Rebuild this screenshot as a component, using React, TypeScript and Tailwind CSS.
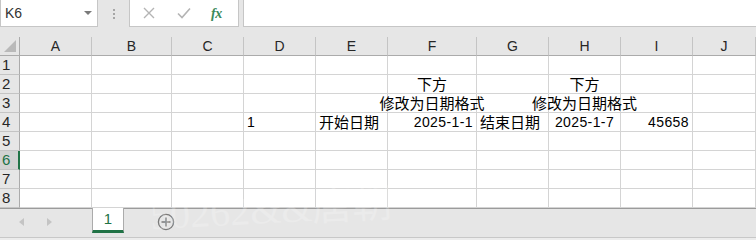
import React from 'react';

type Align = 'left' | 'center' | 'right';

interface CellData {
  text: string;
  align: Align;
  num?: boolean;
}

const COLS = ['A', 'B', 'C', 'D', 'E', 'F', 'G', 'H', 'I', 'J'];

// cell contents keyed by row, then column letter
const DATA: Record<number, Record<string, CellData>> = {
  2: {
    F: { text: '下方', align: 'center' },
    H: { text: '下方', align: 'center' },
  },
  3: {
    F: { text: '修改为日期格式', align: 'center' },
    H: { text: '修改为日期格式', align: 'center' },
  },
  4: {
    D: { text: '1', align: 'left', num: true },
    E: { text: '开始日期', align: 'left' },
    F: { text: '2025-1-1', align: 'right', num: true },
    G: { text: '结束日期', align: 'left' },
    H: { text: '2025-1-7', align: 'center', num: true },
    I: { text: '45658', align: 'right', num: true },
  },
};

const alignClass: Record<Align, string> = {
  left: 'justify-start pl-[3px]',
  center: 'justify-center',
  right: 'justify-end pr-[3px]',
};

function Cell({ data }: { data?: CellData }) {
  return (
    <div className="h-[19px] border-r border-b border-[#d4d4d4] relative">
      {data && (
        <div
          className={`absolute inset-0 flex items-end whitespace-nowrap text-[#000] ${alignClass[data.align]} ${
            data.num
              ? "font-['Liberation_Sans',sans-serif] text-[14px] leading-[17px] tracking-[0.4px]"
              : "font-['Noto_Sans_CJK_SC',sans-serif] text-[15px] leading-[19px]"
          }`}
        >
          {data.text}
        </div>
      )}
    </div>
  );
}

function FormulaBar() {
  return (
    <div className="flex h-[37px] items-start bg-[#e6e6e6]">
      {/* Name box */}
      <div className="w-[98px] h-[27px] bg-white border border-t-0 border-[#c6c6c6] flex items-center justify-between pl-[4px] pr-[5px]">
        <span className="font-['Liberation_Sans',sans-serif] text-[14px] text-[#333]">K6</span>
        <span className="w-0 h-0 border-l-[4px] border-r-[4px] border-t-[4px] border-l-transparent border-r-transparent border-t-[#7a7a7a]" />
      </div>
      <div className="w-[31px] h-[27px] flex flex-col items-center justify-center gap-[2px]">
        <span className="w-[2px] h-[2px] bg-[#a6a6a6]" />
        <span className="w-[2px] h-[2px] bg-[#a6a6a6]" />
        <span className="w-[2px] h-[2px] bg-[#a6a6a6]" />
      </div>
      {/* cancel / enter / fx */}
      <div className="w-[110px] h-[27px] bg-white border border-t-0 border-[#c6c6c6] flex items-center">
        <svg width="12" height="12" viewBox="0 0 12 12" className="ml-[13px]">
          <path d="M1 1L11 11M11 1L1 11" stroke="#b4b4b4" strokeWidth="1.4" />
        </svg>
        <svg width="14" height="12" viewBox="0 0 14 12" className="ml-[22px]">
          <path d="M1 6.5L5 10.5L13 1.5" stroke="#b4b4b4" strokeWidth="1.6" fill="none" />
        </svg>
        <span className="ml-[20px] font-['Liberation_Serif',serif] italic font-bold text-[14px] text-[#3b8a5b] tracking-[-0.5px]">
          fx
        </span>
      </div>
      <div className="ml-[4px] flex-1 h-[27px] bg-white border border-t-0 border-r-0 border-[#c6c6c6]" />
    </div>
  );
}

function Grid() {
  const rows = [1, 2, 3, 4, 5, 6, 7, 8];
  return (
    <div className="grid grid-cols-[20px_72px_80px_72px_72px_72px_89px_72px_72px_72px_1fr] bg-white">
      {/* header row */}
      <div className="h-[19px] bg-[#e6e6e6] border-r border-b border-[#ababab] relative">
        <svg width="12" height="12" viewBox="0 0 12 12" className="absolute right-[3px] bottom-[3px]">
          <path d="M12 0V12H0Z" fill="#b9b9b9" />
        </svg>
      </div>
      {COLS.map((c) => (
        <div
          key={c}
          className="h-[19px] bg-[#e6e6e6] border-r border-b border-r-[#c4c4c4] border-b-[#ababab] flex items-center justify-center font-['Liberation_Sans',sans-serif] text-[14px] text-[#262626]"
        >
          {c}
        </div>
      ))}
      {rows.map((r) => (
        <React.Fragment key={r}>
          <div
            className={`h-[19px] flex items-center pl-[2px] font-['Liberation_Sans',sans-serif] text-[15px] border-b ${
              r === 6
                ? 'bg-[#d2d2d2] text-[#217346] border-r-2 border-r-[#217346] border-b-[#c4c4c4]'
                : 'bg-[#e6e6e6] text-[#262626] border-r border-r-[#ababab] border-b-[#c4c4c4]'
            }`}
          >
            {r}
          </div>
          {COLS.map((c) => (
            <Cell key={c} data={DATA[r]?.[c]} />
          ))}
        </React.Fragment>
      ))}
    </div>
  );
}

function SheetTabs() {
  return (
    <div className="h-[32px] bg-[#e6e6e6] border-t border-[#9b9b9b] flex flex-col">
      <div className="h-[28px] flex items-start">
        <div className="w-[92px] h-[25px] flex items-center">
          <svg width="5" height="8" viewBox="0 0 5 8" className="ml-[19px]">
            <path d="M5 0V8L0 4Z" fill="#c4c4c4" />
          </svg>
          <svg width="5" height="8" viewBox="0 0 5 8" className="ml-[23px]">
            <path d="M0 0V8L5 4Z" fill="#c4c4c4" />
          </svg>
        </div>
        <div className="w-[32px] h-[25px] bg-white border-l border-r border-[#ababab] border-b-[3px] border-b-[#217346] -mt-px flex items-center justify-center font-['Liberation_Sans',sans-serif] text-[15px] text-[#217346]">
          1
        </div>
        <div className="h-[25px] flex items-center ml-[33px]">
          <svg width="18" height="18" viewBox="0 0 18 18">
            <circle cx="9" cy="9" r="7.6" fill="none" stroke="#7a7a7a" strokeWidth="1.3" />
            <path d="M9 4.5V13.5M4.5 9H13.5" stroke="#7a7a7a" strokeWidth="1.6" />
          </svg>
        </div>
      </div>
      <div className="flex-1 border-t border-[#c8c8c8] bg-[#ececec]" />
    </div>
  );
}

export default function App() {
  return (
    <div className="w-[756px] h-[240px] overflow-hidden relative bg-[#e6e6e6]">
      <FormulaBar />
      <Grid />
      <SheetTabs />
      {/* faint watermark */}
      <div className="absolute left-[150px] top-[186px] pointer-events-none whitespace-nowrap font-['Liberation_Serif','Noto_Sans_CJK_SC',serif] text-[40px] leading-[48px] text-white opacity-20 -rotate-3">
        50262&amp;&amp;唐朝
      </div>
    </div>
  );
}
